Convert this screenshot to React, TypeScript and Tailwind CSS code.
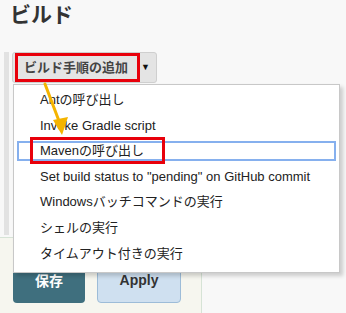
const items = [
  "Antの呼び出し",
  "Invoke Gradle script",
  "Mavenの呼び出し",
  'Set build status to "pending" on GitHub commit',
  "Windowsバッチコマンドの実行",
  "シェルの実行",
  "タイムアウト付きの実行",
];

const font = { fontFamily: '"Liberation Sans", Arial, "Noto Sans CJK JP", sans-serif' };

function DropdownMenu() {
  return (
    <div className="absolute left-[13px] top-[84px] w-[327px] h-[189px] bg-white border border-[#c8c8c8] shadow-[3px_3px_4px_rgba(0,0,0,0.18)] pt-[2px]">
      {items.map((label, i) => (
        <div key={label} className="h-[25.6px] flex items-center text-[13px] text-[#222]">
          {i === 2 ? (
            <div className="mx-[3px] flex-1 h-[20px] pl-[21px] border-2 border-[#86b0ee] flex items-center">{label}</div>
          ) : (
            <div className="pl-[26px]">{label}</div>
          )}
        </div>
      ))}
      <span className="absolute left-[16px] top-[52px] w-[135px] h-[27px] border-[3px] border-[#e8000b]" />
    </div>
  );
}

function Arrow() {
  return (
    <svg className="absolute left-0 top-0 pointer-events-none" width="346" height="313">
      <line x1="45" y1="84" x2="59" y2="121" stroke="#f4b400" strokeWidth="3" strokeLinecap="round" />
      <polygon points="53,120 68,117 62,135" fill="#f4b400" />
    </svg>
  );
}

export default function App() {
  return (
    <div className="relative w-[346px] h-[313px] overflow-hidden bg-[#f8f8f8] flex flex-col" style={font}>
      <div className="h-[52px] pl-[10px] pt-[2px]">
        <h1 className="text-[21px] font-bold text-[#333] leading-[26px]">ビルド</h1>
      </div>

      <div className="h-[185px] flex">
        <div className="ml-[4px] w-[5px] h-[183px] bg-[#e2e2e2]" />
        <div className="ml-[3px]">
          <div className="w-[145px] h-[31px] bg-[#e4e4e4] border border-[#cfcfcf] rounded-[3px] flex items-center pl-[2px]">
            <span className="h-[29px] w-[125px] border-[3px] border-[#e8000b] flex items-center pl-[6px] text-[13px] font-bold text-[#444]">
              ビルド手順の追加
            </span>
            <span className="ml-[1px] text-[9px] text-[#111]">▼</span>
          </div>
        </div>
      </div>

      <div className="flex-1 w-[202px] bg-[#f6f6ef] border-t border-r border-[#d6e3d6] flex pt-[22px] pl-[13px] gap-[12px]">
        <button className="w-[72px] h-[43px] rounded-[4px] bg-[#3f6f7e] text-white font-bold text-[14px]">保存</button>
        <button className="w-[84px] h-[45px] -mt-[2px] rounded-[4px] bg-[#cfe0f0] border border-[#9dbcd8] text-[#333] font-bold text-[14px]">
          Apply
        </button>
      </div>

      <DropdownMenu />
      <Arrow />
    </div>
  );
}
